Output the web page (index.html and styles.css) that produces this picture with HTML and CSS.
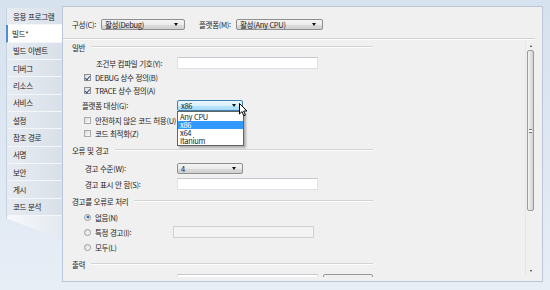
FILE: index.html
```html
<!DOCTYPE html>
<html lang="ko">
<head>
<meta charset="utf-8">
<title>빌드</title>
<link rel="stylesheet" href="styles.css">
</head>
<body>
<div class="window">
  <nav class="tabs">
    <div class="tab">응용 프로그램</div>
    <div class="tab active">빌드*</div>
    <div class="tab">빌드 이벤트</div>
    <div class="tab">디버그</div>
    <div class="tab">리소스</div>
    <div class="tab">서비스</div>
    <div class="tab">설정</div>
    <div class="tab">참조 경로</div>
    <div class="tab">서명</div>
    <div class="tab">보안</div>
    <div class="tab">게시</div>
    <div class="tab">코드 분석</div>
  </nav>
  <main class="panel">
    <div class="toolbar">
      <span class="tb-label tb-cfg">구성(C):</span>
      <div class="select sel-cfg"><span>활성(Debug)</span><i class="arrow"></i></div>
      <span class="tb-label tb-plat">플랫폼(M):</span>
      <div class="select sel-plat"><span>활성(Any CPU)</span><i class="arrow"></i></div>
    </div>
    <div class="body">
      <div class="content">
        <div class="section r16"><span>일반</span><i class="rule"></i></div>
        <div class="row r16"><span class="lbl in24">조건부 컴파일 기호(Y):</span><div class="textbox"></div></div>
        <div class="row r13"><span class="check on"></span><span class="clabel">DEBUG 상수 정의(B)</span></div>
        <div class="row r13"><span class="check on"></span><span class="clabel">TRACE 상수 정의(A)</span></div>
        <div class="row r17"><span class="lbl in10">플랫폼 대상(G):</span>
          <div class="select small focus"><span>x86</span><i class="arrow"></i>
            <ul class="droplist">
              <li>Any CPU</li>
              <li class="hi">x86</li>
              <li>x64</li>
              <li>Itanium</li>
            </ul>
            <svg class="cursor" width="9" height="14" viewBox="0 0 9 14"><path d="M0.5 0.5 L0.5 11 L3 8.6 L4.8 12.8 L6.4 12.1 L4.7 8 L8 8 Z" fill="#fff" stroke="#000" stroke-width="1" stroke-linejoin="round"/></svg>
          </div>
        </div>
        <div class="row r13"><span class="check"></span><span class="clabel">안전하지 않은 코드 허용(U)</span></div>
        <div class="row r13"><span class="check"></span><span class="clabel">코드 최적화(Z)</span></div>
        <div class="section r20"><span>오류 및 경고</span><i class="rule"></i></div>
        <div class="row r16"><span class="lbl in13">경고 수준(W):</span><div class="select small"><span>4</span><i class="arrow"></i></div></div>
        <div class="row r16"><span class="lbl in13">경고 표시 안 함(S):</span><div class="textbox"></div></div>
        <div class="section r18"><span>경고를 오류로 처리</span><i class="rule"></i></div>
        <div class="row r14"><span class="radio on"></span><span class="clabel">없음(N)</span></div>
        <div class="row r16"><span class="radio"></span><span class="clabel rlabel">특정 경고(I):</span><div class="textbox disabled"></div></div>
        <div class="row r14"><span class="radio"></span><span class="clabel">모두(L)</span></div>
        <div class="section r20"><span>출력</span><i class="rule"></i></div>
        <div class="row r14 top"><span class="lbl"></span><div class="textbox"></div><div class="button"></div></div>
      </div>
      <div class="scrollbar">
        <div class="sb-btn"><i class="tri up"></i></div>
        <div class="thumb"><i class="grip"></i></div>
        <div class="sb-track"></div>
        <div class="sb-btn"><i class="tri down"></i></div>
      </div>
    </div>
  </main>
</div>
</body>
</html>
```
FILE: styles.css
```css
html, body {
  margin: 0;
  padding: 0;
}
body {
  width: 550px;
  height: 290px;
  overflow: hidden;
  background: linear-gradient(to bottom, #d7e2ef 0%, #dfe8f3 60%, #e8eef6 100%);
  font-family: "Noto Sans CJK KR", sans-serif;
  font-size: 7.5px;
  letter-spacing: -0.3px;
  color: #1c1c1c;
}
.window {
  display: flex;
  align-items: flex-start;
  padding-top: 6px;
  height: 290px;
  box-sizing: border-box;
}

/* left tabs */
.tabs {
  margin-left: 6px;
  margin-top: 2px;
  width: 56px;
  height: 232px;
  display: flex;
  flex-direction: column;
  background: linear-gradient(to right, #f7f9fc, #e3e9f0);
  border-left: 1px solid #c6d1de;
  box-sizing: border-box;
  clip-path: polygon(0 0, 100% 0, 100% 100%, 0 calc(100% - 22px));
}
.tab {
  height: 17.33px;
  box-sizing: border-box;
  flex: none;
  display: flex;
  align-items: center;
  padding-left: 6px;
  white-space: nowrap;
  background: linear-gradient(to right, #e7ecf2, #d9e0e9);
  border-bottom: 1px solid #f4f7fa;
  color: #222;
}
.tab.active {
  background: #ffffff;
  border-left: 2px solid #4d8fd6;
  padding-left: 4px;
  margin-left: -1px;
}

/* main panel */
.panel {
  flex: 1;
  margin-right: 7px;
  height: 276px;
  box-sizing: border-box;
  border: 1px solid #b9c7d9;
  background: #f0f0f0;
  display: flex;
  flex-direction: column;
  padding-bottom: 4px;
}
.toolbar {
  height: 32px;
  box-sizing: border-box;
  margin-right: 7px;
  padding: 12px 0 0 9px;
  display: flex;
  align-items: flex-start;
  border-bottom: 1px solid #d2d2d2;
  box-shadow: 0 1px 0 #fbfbfb;
}
.tb-label {
  line-height: 11px;
  white-space: nowrap;
}
.tb-cfg { width: 29px; }
.tb-plat { width: 37px; margin-left: 14px; }
.sel-cfg { width: 84px; }
.sel-plat { width: 87px; }

.select {
  position: relative;
  height: 11px;
  box-sizing: border-box;
  border: 1px solid #8e8f8f;
  border-radius: 2px;
  background: linear-gradient(to bottom, #f4f4f4 0%, #ebebeb 50%, #dddddd 51%, #cfcfcf 100%);
  padding-left: 3px;
  line-height: 9px;
  display: flex;
  align-items: center;
  white-space: nowrap;
}
.select.small { width: 66px; }
.select.focus {
  border-color: #3c7fb1;
  background: linear-gradient(to bottom, #eaf6fd 0%, #d9f0fc 50%, #bee6fd 51%, #a7d9f5 100%);
}
.arrow {
  position: absolute;
  right: 6px;
  top: 3px;
  width: 0;
  height: 0;
  border-left: 2.5px solid transparent;
  border-right: 2.5px solid transparent;
  border-top: 3px solid #111;
}

/* scroll body */
.body {
  flex: 1;
  display: flex;
  overflow: hidden;
}
.content {
  flex: 1;
  padding-left: 9px;
  overflow: hidden;
}
.section {
  width: 301px;
  display: flex;
  align-items: center;
  white-space: nowrap;
}
.rule {
  flex: 1;
  margin-left: 6px;
  height: 0;
  border-top: 1px solid #d3d3d3;
  border-bottom: 1px solid #fdfdfd;
}
.row {
  display: flex;
  align-items: center;
  white-space: nowrap;
}
.row.top { align-items: flex-start; }
.r13 { height: 13px; }
.r14 { height: 14px; }
.r16 { height: 16px; }
.r17 { height: 17px; }
.r18 { height: 18px; }
.r20 { height: 20px; }

.lbl {
  width: 105px;
  box-sizing: border-box;
  flex: none;
}
.in10 { padding-left: 10px; }
.in13 { padding-left: 13px; }
.in24 { padding-left: 24px; }

.textbox {
  width: 141px;
  height: 13px;
  box-sizing: border-box;
  background: #fff;
  border: 1px solid #dde2e8;
  border-top-color: #c4c9cf;
}
.row.r16 .textbox { height: 12px; }
.textbox.disabled {
  background: #f3f3f3;
  border-color: #d2d2d2;
}
.button {
  margin-left: 5px;
  width: 50px;
  height: 14px;
  box-sizing: border-box;
  border: 1px solid #9a9a9a;
  border-radius: 2px;
  background: linear-gradient(#f2f2f2, #dcdcdc);
}

.check, .radio {
  width: 7px;
  height: 7px;
  box-sizing: border-box;
  margin-left: 12px;
  border: 1px solid #8e8f8f;
  background: linear-gradient(135deg, #dcdcdc, #fbfbfb);
  position: relative;
  flex: none;
}
.check.on::after {
  content: "";
  position: absolute;
  left: 1.3px;
  top: -0.5px;
  width: 2px;
  height: 4px;
  border-right: 1.3px solid #2b4d83;
  border-bottom: 1.3px solid #2b4d83;
  transform: rotate(40deg);
}
.check:not(.on) {
  border-color: #a9a9a9;
}
.radio {
  border-radius: 50%;
  border-color: #9a9a9a;
}
.radio.on::after {
  content: "";
  position: absolute;
  left: 1.5px;
  top: 1.5px;
  width: 2px;
  height: 2px;
  border-radius: 50%;
  background: #2d5fa8;
  box-shadow: 0 0 0 0.5px #5a8fd8;
}
.clabel { margin-left: 4px; }
.rlabel { width: 78px; }

/* dropdown list */
.droplist {
  position: absolute;
  left: -1px;
  top: 10px;
  width: 67px;
  margin: 0;
  padding: 1px 0 0;
  list-style: none;
  background: #fff;
  border: 1px solid #646464;
  box-sizing: border-box;
  box-shadow: 2px 2px 2px rgba(0, 0, 0, 0.28);
  z-index: 5;
}
.droplist li {
  height: 8px;
  line-height: 8px;
  padding-left: 2px;
  color: #1c1c1c;
}
.droplist li.hi {
  background: #3399ff;
  color: #fff;
}
.cursor {
  position: absolute;
  left: 61px;
  top: 2px;
  z-index: 6;
}

/* scrollbar */
.scrollbar {
  width: 9px;
  margin: 2px 7px 2px 0;
  display: flex;
  flex-direction: column;
  align-items: center;
  border-left: 1px solid #e6e6e6;
  background: #f0f0f0;
}
.sb-btn {
  height: 9px;
  width: 9px;
  display: flex;
  align-items: center;
  justify-content: center;
  flex: none;
}
.tri {
  width: 0;
  height: 0;
  border-left: 1.5px solid transparent;
  border-right: 1.5px solid transparent;
}
.tri.up { border-bottom: 2px solid #333; }
.tri.down { border-top: 2px solid #333; }
.thumb {
  width: 7px;
  height: 161px;
  box-sizing: border-box;
  border: 1px solid #9b9b9b;
  border-radius: 2px;
  background: linear-gradient(to right, #f3f3f3, #e2e2e2 50%, #d0d0d0);
  display: flex;
  align-items: center;
  justify-content: center;
  flex: none;
}
.grip {
  width: 3px;
  height: 4px;
  border-top: 1px solid #777;
  border-bottom: 1px solid #777;
  box-sizing: border-box;
  background: linear-gradient(#fff 40%, #777 40%, #777 60%, #fff 60%);
}
.sb-track { flex: 1; }
```
